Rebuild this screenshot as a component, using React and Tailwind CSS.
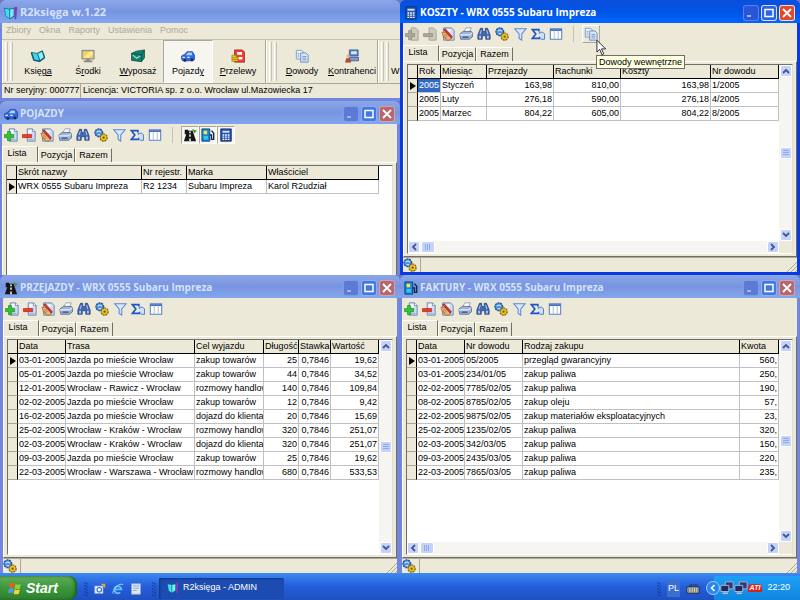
import { useState } from "react";
import clsx from "clsx";

const uiFont = "font-['Liberation_Sans',Arial,sans-serif] text-[9px]";

/* ---------- icons ---------- */

function Icon({ size = "size-3.5", children }) {
  return (
    <svg viewBox="0 0 16 16" className={clsx("shrink-0", size)} aria-hidden="true">
      {children}
    </svg>
  );
}

function Sheet() {
  return (
    <>
      <path d="M6 1h6l3 3v11H6z" fill="#cfdcf2" stroke="#5f7bb0" />
      <path d="M7 2h4v4H7z" fill="#f4f8fe" />
      <path d="M12 1v3h3" fill="#fff" stroke="#5f7bb0" strokeWidth=".8" />
      <path d="M8 13h5" stroke="#8ea6d0" />
    </>
  );
}

function AddIcon({ disabled }) {
  return (
    <Icon>
      {disabled ? <path d="M7 1h5l3 3v11H7z" fill="#cfcbbc" stroke="#a29e90" /> : <Sheet />}
      <path
        d="M4 4h3.500v3.500H11V11H7.500v3.500H4V11H.5V7.500H4z"
        fill={disabled ? "#aaa698" : "#35c23a"}
        stroke={disabled ? "#8b8779" : "#0f8a18"}
        strokeWidth=".7"
      />
    </Icon>
  );
}

function RemoveIcon({ disabled }) {
  return (
    <Icon>
      {disabled ? <path d="M7 1h5l3 3v11H7z" fill="#cfcbbc" stroke="#a29e90" /> : <Sheet />}
      <path
        d="M.5 7.500H11V11H.5z"
        fill={disabled ? "#aaa698" : "#f23a22"}
        stroke={disabled ? "#8b8779" : "#b01a10"}
        strokeWidth=".7"
      />
    </Icon>
  );
}

function EditIcon() {
  return (
    <Icon>
      <path d="M3 1h9l3 3v11H3z" fill="#cfdcf2" stroke="#5f7bb0" />
      <path d="M6 2.500h5v3H6z" fill="#f4f8fe" />
      <path d="M1 6l4 0 5 4 2 2-2 3H7l-4-3z" fill="#eeb072" stroke="#90561f" strokeWidth=".7" />
      <path d="M3 3l2-1 8 9-1 2z" fill="#d2352b" stroke="#7a1714" strokeWidth=".6" />
      <path d="M4 8l3 3M3 10l3 3" stroke="#90561f" strokeWidth=".8" />
    </Icon>
  );
}

function PrintIcon() {
  return (
    <Icon>
      <path d="M5 6l3-5h6l-2 5z" fill="#fff" stroke="#7289ad" strokeWidth=".8" />
      <path d="M1 8l4-3h9l1.500 2v4L12 14H2z" fill="#9fb4d6" stroke="#4a6290" strokeWidth=".9" />
      <path d="M1 9h10.500L15 7" fill="none" stroke="#e8effa" strokeWidth="1.200" />
      <path d="M4 11.500h7" stroke="#2f4a80" strokeWidth="1.400" />
    </Icon>
  );
}

function FindIcon() {
  return (
    <Icon>
      <path d="M4 1.500h2.500V5h3V1.500H12L15 9v5h-5v-4H6v4H1V9z" fill="#4468b0" stroke="#1c3874" strokeWidth=".8" />
      <path d="M2.500 10h2v3h-2zM11.500 10h2v3h-2z" fill="#b7ccf2" />
      <path d="M5 3.500L3.500 8M11 3.500L12.500 8" stroke="#a9c2ee" strokeWidth="1.200" />
    </Icon>
  );
}

function GearsIcon({ size }) {
  return (
    <Icon size={size}>
      <circle cx="5.500" cy="5.500" r="4.400" fill="#4c8fe0" stroke="#24569f" strokeWidth="1.600" strokeDasharray="2.300 .8" />
      <path d="M3 5q2-3 5 0M4 7.500h3" fill="none" stroke="#bfe0fb" strokeWidth="1.300" />
      <circle cx="11" cy="11" r="4" fill="#edc62c" stroke="#8a6c0a" strokeWidth="1.600" strokeDasharray="2.200 .8" />
      <circle cx="11" cy="11" r="1.300" fill="#6d5506" />
    </Icon>
  );
}

function FilterIcon() {
  return (
    <Icon>
      <path d="M2 2h13L10 8v7l-3-2V8z" fill="#dbe8fc" stroke="#5b88d2" strokeWidth="1.200" />
    </Icon>
  );
}

function SumIcon() {
  return (
    <Icon>
      <path d="M9 5V3H1.500l4 5-4 5H10v-2" fill="none" stroke="#1f55c4" strokeWidth="1.900" />
      <path d="M9.500 8V6h4l2 2v6h-4" fill="#cfe0fa" stroke="#3d6fcb" />
    </Icon>
  );
}

function ColumnsIcon() {
  return (
    <Icon>
      <path d="M1.500 2h13v12h-13z" fill="#fff" stroke="#5a80c6" strokeWidth="1.200" />
      <path d="M1.500 3.500h13" stroke="#3a67bd" strokeWidth="2" />
      <path d="M6 4v9.500M10.500 4v9.500" stroke="#9db4dc" />
    </Icon>
  );
}

function RoadIcon({ size }) {
  return (
    <Icon size={size}>
      <path d="M5 3h6l4 12H1z" fill="#151515" />
      <path d="M8 4v2M8 7.500v2.500M8 12v3" stroke="#fff" strokeWidth="1.700" />
      <path d="M2 2h4v5H2z" fill="#151515" />
      <path d="M10 1l6 2-3 3z" fill="#3f9b35" />
    </Icon>
  );
}

function PumpIcon({ size }) {
  return (
    <Icon size={size}>
      <path d="M1 1h9v14H1z" fill="#1688d8" stroke="#0a3f7d" />
      <path d="M3 3h4v4H3z" fill="#ffe14a" />
      <path d="M3 9h5v4H3z" fill="#37c4ec" />
      <path d="M10 8h2v5h2.500V6L12 3" fill="none" stroke="#162840" strokeWidth="1.600" />
    </Icon>
  );
}

function CalcIcon({ size }) {
  return (
    <Icon size={size}>
      <path d="M2 1h12v14H2z" fill="#2450ae" stroke="#132c6b" />
      <path d="M4 3h8v2.500H4z" fill="#bfe0ff" />
      <path d="M4 8h8M4 10.500h8M4 13h8" stroke="#fff" strokeWidth="1.500" strokeDasharray="2 1" />
    </Icon>
  );
}

function CarIcon({ size }) {
  return (
    <Icon size={size}>
      <path d="M.5 8l3-1.500L7 3h6l2.500 4v5l-2 1.500H2L.5 11z" fill="#2f68de" stroke="#173a94" strokeWidth=".8" />
      <path d="M5.500 7L8 4h4l1 3z" fill="#b3d2fc" />
      <path d="M1.500 9.500h3M7 9.500h3" stroke="#dceafe" strokeWidth="1.300" />
      <circle cx="4.500" cy="13" r="1.600" fill="#142a5e" />
      <circle cx="12.500" cy="12.500" r="1.600" fill="#142a5e" />
    </Icon>
  );
}

function BookIcon({ size }) {
  return (
    <Icon size={size}>
      <path d="M0 4l7 1 6-3 3 8-6 4.500L3 13z" fill="#0e5d86" stroke="#083a58" strokeWidth=".8" />
      <path d="M1.500 4.500l5.500 1 2.500 7.500-5.500-1z" fill="#37d8ee" />
      <path d="M8 5.500l4.500-2.500 2 6.500-4 3z" fill="#8cf0f8" />
    </Icon>
  );
}

function AppIcon({ size }) {
  return (
    <Icon size={size}>
      <path d="M0 2l6 1 6-1v10l-5 3-5-3z" fill="#0c6f96" />
      <path d="M1 3l5 1v10l-3.500-2.500z" fill="#3fe0ee" />
      <path d="M7 4l4-1v8l-4 3z" fill="#7cecf5" />
      <path d="M12 1h3l-1 14h-2z" fill="#8a35b8" />
    </Icon>
  );
}

function MonitorIcon() {
  return (
    <Icon>
      <path d="M1 1.500h14v10H1z" fill="#b9b7a8" stroke="#77766a" strokeWidth=".8" />
      <path d="M2.500 3h11v7h-11z" fill="#fbd04a" />
      <path d="M2.500 10l7-7h4v3l-4 4z" fill="#ffe995" />
      <path d="M6 11.500h4V13h3v2H3v-2h3z" fill="#8a897c" />
    </Icon>
  );
}

function MailBoxIcon() {
  return (
    <Icon>
      <path d="M.5 5L6 2.500 15.500 1v9L12 14.500.5 13z" fill="#12806f" stroke="#07473c" strokeWidth=".8" />
      <path d="M.5 5L12 6.500v8M12 6.500L15.500 1" fill="none" stroke="#07473c" strokeWidth=".8" />
      <path d="M2 7l4.500 3.500L10.500 8" fill="none" stroke="#8fead8" strokeWidth="1.300" />
    </Icon>
  );
}

function MoneyIcon() {
  return (
    <Icon>
      <path d="M4 1h9l2.500 2.500V15H4z" fill="#ec4034" stroke="#961b14" strokeWidth=".8" />
      <path d="M7 3.500h5.500v3H7zM8.500 9H13v3H8.500z" fill="#fff" />
      <path d="M1 7h5v2h2v5H1z" fill="#f3cc24" stroke="#8f7208" strokeWidth=".7" />
      <path d="M1 10h7M1 12h7" stroke="#8f7208" strokeWidth=".7" />
    </Icon>
  );
}

function DocsIcon() {
  return (
    <Icon>
      <path d="M1.500 1.500h6l2 2v8h-8z" fill="#eef4fd" stroke="#7d97c4" />
      <path d="M6.500 4.500h6l2.500 2.500v8H6.500z" fill="#dce8fa" stroke="#6684ba" />
      <path d="M3 5h2M3 7h2M3 9h2M8.500 8.500h4.500M8.500 10.500h4.500M8.500 12.500h4.500" stroke="#6684ba" strokeWidth=".9" />
    </Icon>
  );
}

function ClientIcon() {
  return (
    <Icon>
      <path d="M5 1h10v7H5z" fill="#5d81c4" stroke="#2a477f" strokeWidth=".8" />
      <path d="M7 2.500h6.500V6H7z" fill="#d5e6fc" />
      <path d="M5 9.500h10.500v4H5z" fill="#7d9acb" stroke="#2a477f" strokeWidth=".8" />
      <circle cx="3.500" cy="8" r="2" fill="#f0b27c" />
      <path d="M0 15.500L1.500 10.500h4l1.500 5z" fill="#c9372d" />
      <path d="M3.500 11v3" stroke="#2c9a41" strokeWidth="1.500" />
    </Icon>
  );
}

function Chevron({ d }) {
  return (
    <svg viewBox="0 0 8 8" className="size-2" aria-hidden="true">
      <path d={d} fill="none" stroke="#44598c" strokeWidth="1.800" />
    </svg>
  );
}

/* ---------- window chrome ---------- */

function TitleButton({ label, active, kind }) {
  return (
    <button
      type="button"
      aria-label={label}
      className={clsx(
        "flex size-4 items-center justify-center rounded-[3px] border",
        kind === "min" ? "border-white/25" : active ? "border-white/80" : "border-white/40",
        kind === "close" && (active ? "bg-[#e0492a]" : "bg-[#b5686f]"),
        kind === "min" && (active ? "bg-[#2a55d8]" : "bg-[#5a7ad6]"),
        kind === "max" && (active ? "bg-[#2d62e8]" : "bg-[#4477e6]")
      )}
    >
      <svg viewBox="0 0 12 12" className="size-3" aria-hidden="true">
        {kind === "min" && <path d="M2 9h4" stroke="#9db4ee" strokeWidth="2" />}
        {kind === "max" && <path d="M1.500 2.500h9M2 2v7.500h8V2" fill="none" stroke="#fff" strokeWidth="1.500" />}
        {kind === "close" && <path d="M2 2l8 8M10 2l-8 8" stroke="#fff" strokeWidth="1.800" />}
      </svg>
    </button>
  );
}

function TitleBar({ title, icon, active, buttons = true }) {
  return (
    <header
      className={clsx(
        "flex h-[23px] shrink-0 items-center gap-0.5 pt-0.5 pr-[5px] pl-1",
        active
          ? "bg-linear-to-b from-[#0a4fdc] via-[#0054e6] to-[#0066ff]"
          : "bg-linear-to-b from-[#8ca7e8] via-[#7894e0] to-[#82a6ee]"
      )}
    >
      {icon}
      <h2
        className={clsx(
          "min-w-0 flex-1 truncate font-['Open_Sans','DejaVu_Sans',sans-serif] font-bold",
          buttons ? "text-[10px]" : "text-[11px]",
          active ? "text-white" : "text-[#d6e2fa]"
        )}
      >
        {title}
      </h2>
      {buttons && (
        <div className="flex gap-0.5">
          <TitleButton label="Minimalizuj" kind="min" active={active} />
          <TitleButton label="Maksymalizuj" kind="max" active={active} />
          <TitleButton label="Zamknij" kind="close" active={active} />
        </div>
      )}
    </header>
  );
}

function Tool({ label, children, framed }) {
  return (
    <button
      type="button"
      aria-label={label}
      className={clsx(
        "flex h-[18px] w-[18px] shrink-0 items-center justify-center",
        framed === "pressed" && "border border-t-[#aca899] border-r-white border-b-white border-l-[#aca899] bg-[#f6f5f0]",
        framed === "hover" && "border border-t-white border-r-[#aca899] border-b-[#aca899] border-l-white"
      )}
    >
      {children}
    </button>
  );
}

function Toolbar({ readOnly, children }) {
  return (
    <div role="toolbar" className="flex h-[22px] shrink-0 items-center">
      <Tool label="Dodaj"><AddIcon disabled={readOnly} /></Tool>
      <Tool label="Usuń"><RemoveIcon disabled={readOnly} /></Tool>
      <Tool label="Edytuj"><EditIcon /></Tool>
      <Tool label="Drukuj"><PrintIcon /></Tool>
      <Tool label="Szukaj"><FindIcon /></Tool>
      <Tool label="Opcje"><GearsIcon /></Tool>
      <Tool label="Filtr"><FilterIcon /></Tool>
      <Tool label="Suma"><SumIcon /></Tool>
      <Tool label="Kolumny"><ColumnsIcon /></Tool>
      {children && (
        <>
          <span className="mx-2 h-4 w-px bg-[#c5c2b2]" />
          {children}
        </>
      )}
    </div>
  );
}

function Tabs() {
  const [tab, setTab] = useState("Lista");
  return (
    <div role="tablist" className={clsx("flex h-4 shrink-0 items-end", uiFont)}>
      {["Lista", "Pozycja", "Razem"].map((name) => (
        <button
          key={name}
          type="button"
          role="tab"
          aria-selected={tab === name}
          onClick={() => setTab(name)}
          className={clsx(
            "border-t border-r border-l border-t-white border-r-[#716f64] border-l-white leading-3",
            tab === name ? "h-4 w-9 pr-1.5 pb-1" : "h-3.5 w-[37px] pb-0.5"
          )}
        >
          {name}
        </button>
      ))}
    </div>
  );
}

const scrollBtn =
  "flex size-3 shrink-0 items-center justify-center rounded-[2px] border border-white bg-[#c3d3fb]";

function VScroll() {
  return (
    <div className="flex w-[13px] shrink-0 flex-col items-center justify-between bg-[#f6f5f1]">
      <button type="button" aria-label="W górę" className={scrollBtn}><Chevron d="M1 6l3-3 3 3" /></button>
      <span className={scrollBtn}>
        <svg viewBox="0 0 8 8" className="size-2" aria-hidden="true"><path d="M1 1.500h6M1 3.500h6M1 5.500h6" stroke="#93a9e4" /></svg>
      </span>
      <button type="button" aria-label="W dół" className={scrollBtn}><Chevron d="M1 2l3 3 3-3" /></button>
    </div>
  );
}

function HScroll() {
  return (
    <div className="flex h-3 shrink-0 bg-[#ece9d8] pr-[13px]">
      <div className="flex flex-1 gap-px bg-[#f6f5f1]">
        <button type="button" aria-label="W lewo" className={scrollBtn}><Chevron d="M6 1L3 4l3 3" /></button>
        <span className="flex h-3 w-3.5 items-center justify-center rounded-[2px] border border-white bg-[#c3d3fb]">
          <svg viewBox="0 0 8 8" className="size-2" aria-hidden="true"><path d="M1.500 1v6M3.500 1v6M5.500 1v6" stroke="#93a9e4" /></svg>
        </span>
        <button type="button" aria-label="W prawo" className={clsx(scrollBtn, "ml-auto")}><Chevron d="M2 1l3 3-3 3" /></button>
      </div>
    </div>
  );
}

function DataTable({ columns, rows, width = "w-full", selectFirst }) {
  return (
    <table className={clsx("table-fixed border-separate border-spacing-0", width, uiFont)}>
      <colgroup>
        <col className="w-2.5" />
        {columns.map((c) => (
          <col key={c.name} className={c.width} />
        ))}
      </colgroup>
      <thead>
        <tr>
          <th className="h-3.5 border-r border-b border-black bg-[#ece9d8] p-0" />
          {columns.map((c) => (
            <th
              key={c.name}
              scope="col"
              className="overflow-hidden border-r border-b border-black bg-[#ece9d8] p-0 pl-px text-left leading-[13px] font-normal whitespace-nowrap"
            >
              {c.name}
            </th>
          ))}
        </tr>
      </thead>
      <tbody>
        {rows.map((row, r) => (
          <tr key={r}>
            <td className="h-3.5 border-r border-b border-r-black border-b-[#aca899] bg-[#ece9d8] p-0">
              {r === 0 && (
                <svg viewBox="0 0 6 8" className="mx-auto h-2 w-1.5" aria-hidden="true">
                  <path d="M0 0l6 4-6 4z" fill="#000" />
                </svg>
              )}
            </td>
            {row.map((cell, i) => (
              <td
                key={i}
                className={clsx(
                  "overflow-hidden border-r border-b border-[#c0c0c0] p-0 px-px leading-[13px] whitespace-nowrap",
                  columns[i].right && "text-right",
                  selectFirst && r === 0 && i === 0 && "bg-[#316ac5] text-white"
                )}
              >
                {cell}
              </td>
            ))}
          </tr>
        ))}
      </tbody>
    </table>
  );
}

function StatusBar() {
  return (
    <footer className="flex h-[15px] shrink-0 items-stretch border-t border-[#aca899]">
      <div className="flex w-4 items-center"><GearsIcon size="size-3.5" /></div>
      <div className="ml-px flex flex-1 items-end justify-end border-l border-[#aca899]">
        <svg viewBox="0 0 10 10" className="size-2.5" aria-hidden="true">
          <path d="M0 10L10 0M4 10l6-6M8 10l2-2" stroke="#aca899" />
        </svg>
      </div>
    </footer>
  );
}

function Window({ title, icon, active, edge, toolbar, status = true, vscroll = true, hscroll, children }) {
  return (
    <section
      className={clsx(
        "flex min-h-0 min-w-0 flex-1 flex-col overflow-hidden rounded-t-md",
        active ? "bg-[#0a3be0]" : "bg-[#7186dc]"
      )}
    >
      <TitleBar title={title} icon={icon} active={active} />
      <div className={clsx("flex min-h-0 flex-1 flex-col bg-[#ece9d8]", edge)}>
        {toolbar}
        <Tabs />
        <div
          className={clsx(
            "flex min-h-0 flex-1 flex-col border-t border-r border-l border-t-white border-r-[#716f64] border-l-white px-[3px] pt-0.5",
            status && "border-b border-b-[#716f64] pb-0.5"
          )}
        >
          <div
            className={clsx(
              "flex min-h-0 flex-1 flex-col border-t border-r border-l border-t-[#716f64] border-r-[#e2dfce] border-l-[#716f64] bg-white",
              status && "border-b border-b-white"
            )}
          >
            <div className="flex min-h-0 flex-1">
              <div className="min-w-0 flex-1 overflow-hidden">{children}</div>
              {vscroll && <VScroll />}
            </div>
            {hscroll && <HScroll />}
          </div>
        </div>
        {status && <StatusBar />}
      </div>
    </section>
  );
}

/* ---------- main window ---------- */

function Grip() {
  return (
    <span className="flex shrink-0 gap-0.5 border-l border-white py-0.5 pl-0.5">
      <span className="w-[3px] border-r border-l border-r-[#c5c2b2] border-l-white" />
      <span className="w-[3px] border-r border-l border-r-[#c5c2b2] border-l-white" />
    </span>
  );
}

function BigButton({ icon, pre = "", hot, post = "", pressed }) {
  return (
    <button
      type="button"
      aria-pressed={pressed}
      className={clsx(
        "flex w-[50px] shrink-0 flex-col items-center gap-0.5 border pt-2 leading-3 whitespace-nowrap",
        uiFont,
        pressed ? "border-t-[#aca899] border-r-white border-b-white border-l-[#aca899] bg-[#f6f5f0]" : "border-transparent"
      )}
    >
      {icon}
      <span className="leading-3">
        {pre}
        <u>{hot}</u>
        {post}
      </span>
    </button>
  );
}

function MainWindow() {
  return (
    <section className="shrink-0 overflow-hidden rounded-t-md bg-[#7186dc] pb-[3px]">
      <TitleBar title="R2księga w.1.22" icon={<AppIcon />} buttons={false} />
      <div className="ml-0.5 bg-[#ece9d8]">
        <nav className={clsx("flex h-4 items-center gap-2 px-1 text-[#aca899]", uiFont)}>
          {["Zbiory", "Okna", "Raporty", "Ustawienia", "Pomoc"].map((item) => (
            <button key={item} type="button">{item}</button>
          ))}
        </nav>
        <div role="toolbar" className="flex h-[45px] overflow-hidden border-t border-b border-t-[#c5c2b2] border-b-[#aca899]">
          <Grip />
          <div className="flex pr-0.5">
            <BigButton icon={<BookIcon />} pre="Księ" hot="ga" />
            <BigButton icon={<MonitorIcon />} pre="Ś" hot="r" post="odki" />
            <BigButton icon={<MailBoxIcon />} hot="W" post="yposaż" />
            <BigButton icon={<CarIcon />} pre="Pojazd" hot="y" pressed />
            <BigButton icon={<MoneyIcon />} hot="P" post="rzelewy" />
          </div>
          <span className="w-px shrink-0 bg-[#aca899]" />
          <Grip />
          <div className="flex">
            <BigButton icon={<DocsIcon />} hot="D" post="owody" />
            <BigButton icon={<ClientIcon />} hot="K" post="ontrahenci" />
          </div>
          <span className="w-px shrink-0 bg-[#aca899]" />
          <Grip />
          <span className={clsx("self-end pb-1.5 pl-0.5 leading-3", uiFont)}>W</span>
        </div>
        <footer className={clsx("flex h-3.5 items-center whitespace-nowrap", uiFont)}>
          <span className="w-[79px] border-r border-[#aca899] pl-0.5">Nr seryjny: 000777</span>
          <span className="pl-0.5">Licencja: VICTORIA sp. z o.o. Wrocław ul.Mazowiecka 17</span>
        </footer>
      </div>
    </section>
  );
}

/* ---------- data ---------- */

const vehicleCols = [
  { name: "Skrót nazwy", width: "w-[125px]" },
  { name: "Nr rejestr.", width: "w-[45px]" },
  { name: "Marka", width: "w-[80px]" },
  { name: "Właściciel" },
];
const vehicles = [["WRX 0555 Subaru Impreza", "R2 1234", "Subaru Impreza", "Karol R2udział"]];

const costCols = [
  { name: "Rok", width: "w-[23px]" },
  { name: "Miesiąc", width: "w-[46px]" },
  { name: "Przejazdy", width: "w-[67px]", right: true },
  { name: "Rachunki", width: "w-[67px]", right: true },
  { name: "Koszty", width: "w-[90px]", right: true },
  { name: "Nr dowodu" },
];
const costs = [
  ["2005", "Styczeń", "163,98", "810,00", "163,98", "1/2005"],
  ["2005", "Luty", "276,18", "590,00", "276,18", "4/2005"],
  ["2005", "Marzec", "804,22", "605,00", "804,22", "8/2005"],
];

const tripCols = [
  { name: "Data", width: "w-[48px]" },
  { name: "Trasa" },
  { name: "Cel wyjazdu", width: "w-[69px]" },
  { name: "Długość", width: "w-[35px]", right: true },
  { name: "Stawka", width: "w-[32px]", right: true },
  { name: "Wartość", width: "w-[48px]", right: true },
];
const trips = [
  ["03-01-2005", "Jazda po mieście Wrocław", "zakup towarów", "25", "0,7846", "19,62"],
  ["05-01-2005", "Jazda po mieście Wrocław", "zakup towarów", "44", "0,7846", "34,52"],
  ["12-01-2005", "Wrocław - Rawicz - Wrocław", "rozmowy handlow", "140", "0,7846", "109,84"],
  ["02-02-2005", "Jazda po mieście Wrocław", "zakup towarów", "12", "0,7846", "9,42"],
  ["16-02-2005", "Jazda po mieście Wrocław", "dojazd do klienta", "20", "0,7846", "15,69"],
  ["25-02-2005", "Wrocław - Kraków - Wrocław", "rozmowy handlow", "320", "0,7846", "251,07"],
  ["02-03-2005", "Wrocław - Kraków - Wrocław", "dojazd do klienta", "320", "0,7846", "251,07"],
  ["09-03-2005", "Jazda po mieście Wrocław", "zakup towarów", "25", "0,7846", "19,62"],
  ["22-03-2005", "Wrocław - Warszawa - Wrocław", "rozmowy handlow", "680", "0,7846", "533,53"],
];

const invoiceCols = [
  { name: "Data", width: "w-[48px]" },
  { name: "Nr dowodu", width: "w-[58px]" },
  { name: "Rodzaj zakupu" },
  { name: "Kwota", width: "w-[39px]", right: true },
];
const invoices = [
  ["03-01-2005", "05/2005", "przegląd gwarancyjny", "560,"],
  ["03-01-2005", "234/01/05", "zakup paliwa", "250,"],
  ["02-02-2005", "7785/02/05", "zakup paliwa", "190,"],
  ["08-02-2005", "8785/02/05", "zakup oleju", "57,"],
  ["22-02-2005", "9875/02/05", "zakup materiałów eksploatacyjnych", "23,"],
  ["25-02-2005", "1235/02/05", "zakup paliwa", "320,"],
  ["02-03-2005", "342/03/05", "zakup paliwa", "150,"],
  ["09-03-2005", "2435/03/05", "zakup paliwa", "220,"],
  ["22-03-2005", "7865/03/05", "zakup paliwa", "235,"],
];

/* ---------- taskbar ---------- */

function Dots() {
  return (
    <svg viewBox="0 0 4 16" className="h-4 w-1 shrink-0" aria-hidden="true">
      <path d="M1 1v14M3 2v14" stroke="#123a94" strokeWidth="1.200" strokeDasharray="1.500 1.500" />
    </svg>
  );
}

function NetIcon() {
  return (
    <Icon size="size-3.5">
      <path d="M6 1h9v8H6z" fill="#2c3c78" stroke="#b3bcd8" />
      <path d="M1 5h9v7H1z" fill="#1d2b60" stroke="#b3bcd8" />
      <path d="M3 14h6" stroke="#b3bcd8" strokeWidth="2" />
    </Icon>
  );
}

function Taskbar() {
  return (
    <footer className={clsx("flex h-[27px] shrink-0 items-stretch bg-linear-to-b from-[#3d8af0] via-[#245edb] to-[#1f50c0] text-white", uiFont)}>
      <button
        type="button"
        className="mt-[3px] flex w-[77px] items-center gap-1 rounded-r-lg bg-linear-to-b from-[#5fae5c] via-[#3a973a] to-[#2f7f30] pl-2 shadow-[inset_-2px_0_3px_#1f5c22]"
      >
        <Icon>
          <path d="M2 3q2.500-2 5.500 0L6.500 8q-3-2-5.500 0z" fill="#ee5a24" />
          <path d="M8.500 3.500q2.500 1.500 6 0L13.500 8.500q-3.500 1.500-6 0z" fill="#8fd23c" />
          <path d="M1 9q3-2 5.500 0l-1 5q-3-2-5.500 0z" fill="#4f9bf5" />
          <path d="M7.500 9.500q2.500 1.500 6 0l-1 5q-3.500 1.500-6 0z" fill="#fbd22c" />
        </Icon>
        <span className="font-['Liberation_Sans',Arial,sans-serif] text-sm font-bold italic">Start</span>
      </button>
      <div className="mt-1 flex items-center pl-[7px]">
        <Dots />
        <div className="flex gap-1.5 px-1.5">
          <button type="button" aria-label="Outlook Express">
            <Icon size="size-3">
              <path d="M1 4h11v10H1z" fill="#f4f7fc" stroke="#7fa0d8" />
              <circle cx="7" cy="9" r="3" fill="none" stroke="#2d6fd0" strokeWidth="1.500" />
              <path d="M9 1h6v6z" fill="#e9a23c" />
            </Icon>
          </button>
          <button type="button" aria-label="Internet Explorer">
            <Icon size="size-3">
              <path d="M3 8.500h9.500a4.700 4.700 0 1 0-1.500 4" fill="none" stroke="#5fc2ff" strokeWidth="2.400" />
              <path d="M2 14Q-1 14 4 7t11-5" fill="none" stroke="#b8e4ff" />
            </Icon>
          </button>
          <button type="button" aria-label="Notatnik">
            <Icon size="size-3">
              <path d="M2 1h12v14H2z" fill="#dde7f8" stroke="#8fa5cf" />
              <path d="M4 4h8M4 7h8M4 10h5" stroke="#7d95c6" />
            </Icon>
          </button>
        </div>
        <span className="pl-1"><Dots /></span>
      </div>
      <button
        type="button"
        className="mt-[3px] ml-[3px] flex h-[21px] w-[125px] items-center gap-1 self-center rounded-[2px] bg-[#1c4cb2] pl-2 shadow-[inset_1px_1px_2px_#12357f]"
      >
        <AppIcon size="size-3" />
        R2księga - ADMIN
      </button>
      <div className="mt-1 ml-auto flex items-center gap-1.5 pr-3.5">
        <Dots />
        <span className="bg-[#3a6fd0] px-px py-0.5">PL</span>
        <svg viewBox="0 0 14 10" className="h-2.5 w-3.5" aria-hidden="true">
          <path d="M1 3h12v6H1z" fill="#e9e6d8" stroke="#23262e" />
          <path d="M2 5h10M2 7h10M4 3V1h8" fill="none" stroke="#23262e" strokeDasharray="1.500 .8" />
        </svg>
      </div>
      <div className="mt-[3px] flex w-[86px] items-center bg-linear-to-b from-[#1fa0f4] to-[#0f86e0]">
        <button type="button" aria-label="Pokaż ukryte ikony" className="-ml-2 flex size-3.5 shrink-0 items-center justify-center rounded-full border border-[#9ad0fb] bg-[#2a86ea]">
          <svg viewBox="0 0 8 8" className="size-2" aria-hidden="true"><path d="M5.500 1l-3 3 3 3" fill="none" stroke="#fff" strokeWidth="1.600" /></svg>
        </button>
        <span className="flex items-center">
          <NetIcon />
          <NetIcon />
        </span>
        <span className="flex h-2 w-3.5 items-center justify-center rounded-t-sm bg-[#d8231c] text-[7px] font-bold italic">ATI</span>
        <span className="mr-2.5 ml-auto">22:20</span>
      </div>
    </footer>
  );
}

export default function App() {
  return (
    <div className="flex h-screen flex-col overflow-hidden bg-[#6878cc] text-black">
      <main className="grid min-h-0 flex-1 grid-cols-2 grid-rows-[275fr_298fr]">
        <div className="flex min-h-0 min-w-0 flex-col">
          <MainWindow />
          <Window
            title="POJAZDY"
            icon={<CarIcon />}
            edge="ml-0.5 mr-[3px]"
            status={false}
            vscroll={false}
            toolbar={
              <Toolbar>
                <Tool label="Przejazdy" framed="pressed"><RoadIcon /></Tool>
                <Tool label="Faktury" framed="pressed"><PumpIcon /></Tool>
                <Tool label="Koszty" framed="pressed"><CalcIcon /></Tool>
              </Toolbar>
            }
          >
            <DataTable columns={vehicleCols} rows={vehicles} width="w-[372px]" />
          </Window>
        </div>
        <div className="flex min-h-0 min-w-0 flex-col">
          <Window
            title="KOSZTY - WRX 0555 Subaru Impreza"
            icon={<CalcIcon />}
            active
            edge="mx-[3px] mb-[3px]"
            hscroll
            toolbar={
              <Toolbar readOnly>
                <div className="relative">
                  <Tool label="Dowody wewnętrzne" framed="hover"><DocsIcon /></Tool>
                  <span
                    role="tooltip"
                    className={clsx("absolute top-[30px] left-3.5 z-10 border border-[#716f64] bg-[#ffffe1] px-0.5 leading-3 whitespace-nowrap", uiFont)}
                  >
                    Dowody wewnętrzne
                  </span>
                  <svg viewBox="0 0 12 18" className="absolute top-3.5 left-3.5 z-20 h-[17px] w-[11px]" aria-hidden="true">
                    <path d="M1 1v13l3-3 2.500 6 2-1L6 10.500h4.500z" fill="#fff" stroke="#222" />
                  </svg>
                </div>
              </Toolbar>
            }
          >
            <DataTable columns={costCols} rows={costs} selectFirst />
          </Window>
        </div>
        <div className="flex min-h-0 min-w-0 flex-col">
          <Window
            title="PRZEJAZDY - WRX 0555 Subaru Impreza"
            icon={<RoadIcon />}
            edge="mx-[3px]"
            toolbar={<Toolbar />}
          >
            <DataTable columns={tripCols} rows={trips} />
          </Window>
        </div>
        <div className="flex min-h-0 min-w-0 flex-col">
          <Window
            title="FAKTURY - WRX 0555 Subaru Impreza"
            icon={<PumpIcon />}
            edge="mr-[3px] ml-0.5"
            hscroll
            toolbar={<Toolbar />}
          >
            <DataTable columns={invoiceCols} rows={invoices} />
          </Window>
        </div>
      </main>
      <Taskbar />
    </div>
  );
}
